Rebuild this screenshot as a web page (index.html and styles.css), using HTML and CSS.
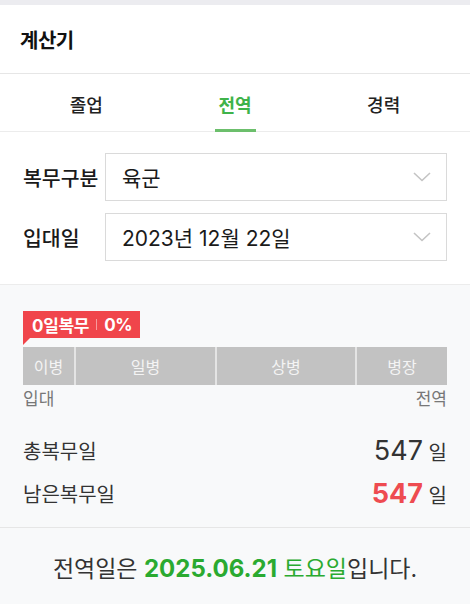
FILE: index.html
```html
<!DOCTYPE html>
<html lang="ko">
<head>
<meta charset="utf-8">
<link rel="stylesheet" href="styles.css">
</head>
<body>
<div class="topstrip"></div>
<header class="header"><h1 class="title">계산기</h1></header>
<nav class="tabs">
  <div class="tab">졸업</div>
  <div class="tab active">전역</div>
  <div class="tab">경력</div>
</nav>
<section class="form">
  <div class="field">
    <div class="label">복무구분</div>
    <div class="select"><span class="value">육군</span>
      <svg class="chev" width="18" height="10" viewBox="0 0 18 10"><polyline points="1,1 9,8.5 17,1" fill="none" stroke="#c4c4c4" stroke-width="1.6"/></svg>
    </div>
  </div>
  <div class="field">
    <div class="label">입대일</div>
    <div class="select"><span class="value">2023년 12월 22일</span>
      <svg class="chev" width="18" height="10" viewBox="0 0 18 10"><polyline points="1,1 9,8.5 17,1" fill="none" stroke="#c4c4c4" stroke-width="1.6"/></svg>
    </div>
  </div>
</section>
<section class="stats">
  <div class="badge"><span>0일복무</span><span class="sep"></span><span>0%</span></div>
  <div class="bar">
    <div class="seg" style="flex-basis:51px">이병</div>
    <div class="seg" style="flex-basis:141px">일병</div>
    <div class="seg" style="flex-basis:140px">상병</div>
    <div class="seg" style="flex-basis:92px">병장</div>
  </div>
  <div class="axis"><span>입대</span><span>전역</span></div>
  <div class="row"><span class="rlabel">총복무일</span><span class="rval"><span class="num">547</span> 일</span></div>
  <div class="row"><span class="rlabel">남은복무일</span><span class="rval"><span class="num red">547</span> 일</span></div>
</section>
<footer class="footer"><p class="msg">전역일은 <b class="green">2025.06.21</b> <span class="green-r">토요일</span>입니다.</p></footer>
</body>
</html>
```
FILE: styles.css
```css
* { box-sizing: border-box; margin: 0; padding: 0; }
html, body { width: 470px; height: 604px; overflow: hidden; }
body {
  font-family: Inter, "Noto Sans CJK KR", "Noto Sans", sans-serif;
  color: #222;
  background: #f8f9fa;
}
.topstrip { height: 5px; background: #ececf0; }
.header {
  height: 69px;
  background: #fff;
  border-bottom: 1px solid #e6e6e6;
  display: flex;
  align-items: center;
  padding-left: 20px;
}
.title { font-size: 20px; font-weight: 700; color: #111; letter-spacing: -0.5px; }
.tabs {
  display: flex;
  height: 58px;
  background: #fff;
  padding: 0 12px;
  border-bottom: 1px solid #ececec;
}
.tab {
  flex: 1;
  display: flex;
  align-items: center;
  justify-content: center;
  font-size: 18px;
  font-weight: 500;
  color: #222;
  position: relative;
  padding-top: 2px;
}
.tab.active { color: #3fb34a; font-weight: 700; }
.tab.active::after {
  content: "";
  position: absolute;
  bottom: -1px;
  left: 50%;
  width: 41px;
  margin-left: -20px;
  height: 3px;
  background: #6cbf6c;
}
.form {
  background: #fff;
  padding: 21px 23px 23px 23px;
  border-bottom: 1px solid #ececec;
  display: flex;
  flex-direction: column;
  gap: 12px;
}
.field { display: flex; align-items: center; }
.label { width: 82px; font-size: 20.5px; font-weight: 500; color: #1a1a1a; }
.select {
  flex: 1;
  height: 48px;
  border: 1px solid #dadada;
  display: flex;
  align-items: center;
  justify-content: space-between;
  padding: 0 15px 0 16px;
  background: #fff;
}
.value { font-size: 21px; color: #1a1a1a; }
.stats { padding: 26px 23px 12px 23px; border-bottom: 1px solid #e6e6e6; }
.badge {
  position: relative;
  display: inline-flex;
  align-items: center;
  height: 27px;
  width: 117px;
  padding-left: 9px;
  background: #f0454b;
  color: #fff;
  font-weight: 700;
  font-size: 17px;
  margin-bottom: 9px;
  letter-spacing: -0.3px;
}
.badge::after {
  content: "";
  position: absolute;
  left: 0;
  top: 100%;
  border-top: 7px solid #f0454b;
  border-right: 7px solid transparent;
}
.sep { display: inline-block; width: 1px; height: 11px; background: rgba(255,255,255,0.45); margin: 0 7px; }
.bar { display: flex; height: 38px; background: #c2c2c2; }
.seg {
  flex: 0 0 auto;
  display: flex;
  align-items: center;
  justify-content: center;
  color: #f4f4f4;
  font-size: 16px;
  border-left: 2px solid #e4e4e4;
}
.seg:first-child { border-left: none; }
.axis {
  display: flex;
  justify-content: space-between;
  height: 24px;
  font-size: 17px;
  color: #777;
  line-height: 28px;
  margin-bottom: 20px;
}
.row { display: flex; justify-content: space-between; align-items: center; height: 43px; }
.rlabel { font-size: 20px; color: #333; }
.rval { font-size: 20px; color: #333; }
.num { font-size: 27px; font-weight: 400; color: #333; }
.num.red { color: #ee4b50; font-weight: 700; }
.footer {
  height: 75px;
  display: flex;
  align-items: center;
  justify-content: center;
  padding-top: 2px;
}
.msg { font-size: 23px; color: #333; white-space: nowrap; }
.green { color: #2aaa30; font-weight: 700; font-size: 24px; }
.green-r { color: #2aaa30; }
```
